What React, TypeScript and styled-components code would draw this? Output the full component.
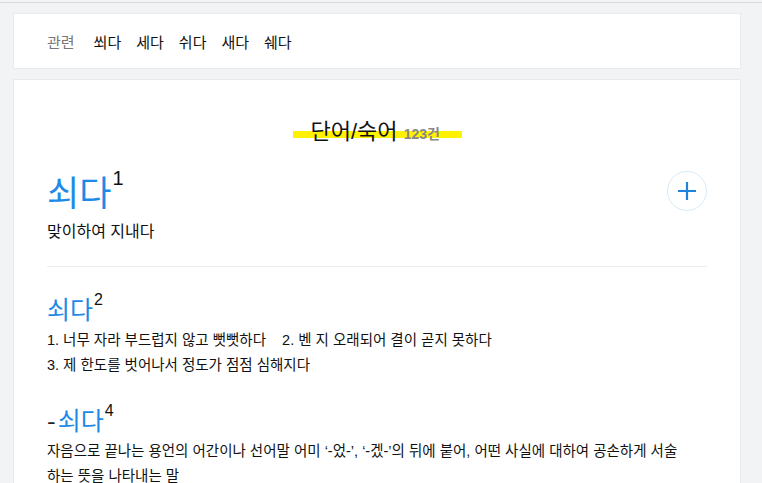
import React from "react";
import styled, { createGlobalStyle } from "styled-components";

const GlobalStyle = createGlobalStyle`
  html, body {
    margin: 0;
    padding: 0;
    background: #f2f3f5;
    font-family: "Liberation Sans", "Noto Sans CJK KR", sans-serif;
    color: #111;
  }
`;

const related = ["쐬다", "세다", "쉬다", "새다", "쉐다"];

const entries = [
  {
    prefix: "-",
    word: "쇠다",
    num: 4,
    lines: [
      "자음으로 끝나는 용언의 어간이나 선어말 어미 ‘-었-’, ‘-겠-’의 뒤에 붙어, 어떤 사실에 대하여 공손하게 서술하는 뜻을 나타내는 말",
    ],
  },
];

export default function App() {
  return (
    <>
      <GlobalStyle />
      <Page>
        <RelatedCard>
          <RelatedLabel>관련</RelatedLabel>
          {related.map((w) => (
            <RelatedWord key={w}>{w}</RelatedWord>
          ))}
        </RelatedCard>
        <ResultCard>
          <SectionTitle>
            <Highlight>
              단어/숙어 <Count>123건</Count>
            </Highlight>
          </SectionTitle>

          <MainEntry>
            <MainHead>
              <Word $size={35}>
                쇠다<Sup $size={20}>1</Sup>
              </Word>
              <AddButton aria-label="add">
                <svg width="22" height="22" viewBox="0 0 22 22">
                  <path d="M11 2v18M2 11h18" stroke="#1c84de" strokeWidth="2.2" fill="none" />
                </svg>
              </AddButton>
            </MainHead>
            <MainMeaning>맞이하여 지내다</MainMeaning>
          </MainEntry>

          <Entry>
            <Word $size={25}>
              쇠다<Sup $size={16}>2</Sup>
            </Word>
            <Meaning>
              1. 너무 자라 부드럽지 않고 뻣뻣하다&nbsp;&nbsp;&nbsp; 2. 벤 지 오래되어 결이 곧지 못하다
            </Meaning>
            <Meaning>3. 제 한도를 벗어나서 정도가 점점 심해지다</Meaning>
          </Entry>

          {entries.map((e) => (
            <Entry key={e.num}>
              <Word $size={25}>
                <Dash>{e.prefix}</Dash>
                {e.word}
                <Sup $size={16}>{e.num}</Sup>
              </Word>
              {e.lines.map((l) => (
                <Meaning key={l}>{l}</Meaning>
              ))}
            </Entry>
          ))}
        </ResultCard>
      </Page>
    </>
  );
}

const Page = styled.div`
  margin-top: 2px;
  border-top: 1px solid #d9dadd;
  padding: 10px 21px 0 13px;
`;

const Card = styled.div`
  background: #ffffff;
  border: 1px solid #e9eaec;
  box-sizing: border-box;
`;

const RelatedCard = styled(Card)`
  height: 56px;
  display: flex;
  align-items: center;
  gap: 15px;
  padding: 0 0 0 33px;
  font-size: 15px;
`;

const RelatedLabel = styled.span`
  color: #777;
  margin-right: 4px;
`;

const RelatedWord = styled.span`
  color: #111;
`;

const ResultCard = styled(Card)`
  margin-top: 10px;
  padding: 38px 33px 0 33px;
`;

const SectionTitle = styled.div`
  text-align: center;
  font-size: 22px;
  line-height: 28px;
`;

const Highlight = styled.span`
  display: inline-block;
  padding: 0 0 0 18px;
  width: 169px;
  box-sizing: border-box;
  text-align: left;
  white-space: nowrap;
  background: linear-gradient(to bottom, transparent 13px, #fff200 13px, #fff200 20px, transparent 20px);
`;

const Count = styled.span`
  font-size: 14px;
  font-weight: bold;
  color: #888;
`;

const MainEntry = styled.div`
  padding: 20px 0 22px;
  border-bottom: 1px solid #ececec;
`;

const MainHead = styled.div`
  display: flex;
  justify-content: space-between;
  align-items: flex-start;
`;

const Word = styled.div<{ $size: number }>`
  font-size: ${(p) => p.$size}px;
  line-height: ${(p) => Math.round(p.$size * 1.3)}px;
  color: #1c8ae6;
  font-family: "Noto Sans CJK KR", sans-serif;
  margin-bottom: 3px;
`;

const Sup = styled.sup<{ $size: number }>`
  font-family: "Liberation Sans", sans-serif;
  font-size: ${(p) => p.$size}px;
  color: #111;
  vertical-align: top;
  line-height: 1;
  margin-left: 1px;
`;

const Dash = styled.span`
  color: #222;
  margin-right: 2px;
`;

const AddButton = styled.button`
  width: 40px;
  height: 40px;
  margin-top: 3px;
  border-radius: 50%;
  border: 1px solid #d6eaf8;
  background: #fff;
  display: flex;
  align-items: center;
  justify-content: center;
  padding: 0;
`;

const MainMeaning = styled.div`
  font-size: 16px;
  line-height: 24px;
  margin-top: 3px;
`;

const Entry = styled.div`
  padding-top: 25px;
`;

const Meaning = styled.div`
  font-size: 14.5px;
  line-height: 25px;
  padding-right: 20px;
`;
